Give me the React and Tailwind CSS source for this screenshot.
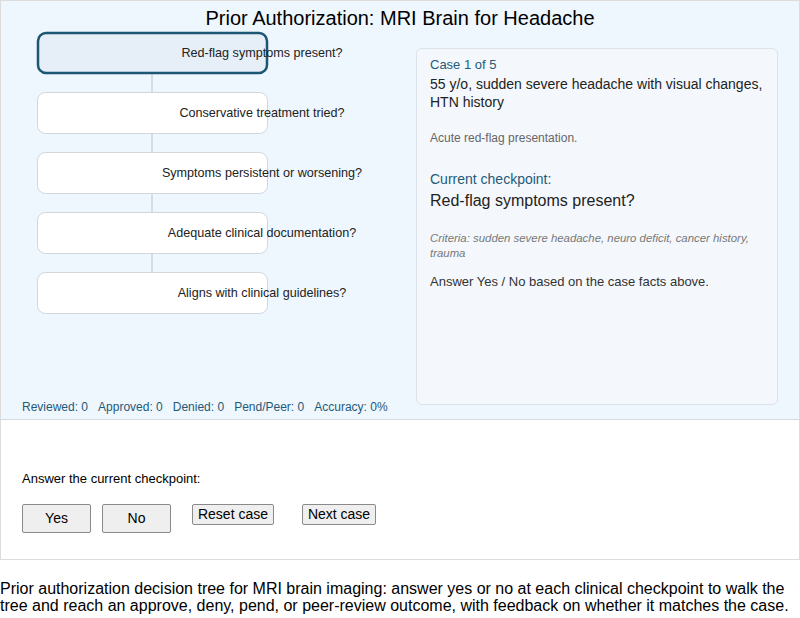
import React from 'react';

const checkpoints = [
    'Red-flag symptoms present?',
    'Conservative treatment tried?',
    'Symptoms persistent or worsening?',
    'Adequate clinical documentation?',
    'Aligns with clinical guidelines?'
];

const DecisionTree = () => (
    <svg width="372" height="300" className="block">
        {checkpoints.slice(0, -1).map((_, i) => (
            <line key={'l' + i} x1="130" x2="130" y1={44 + i * 60} y2={62 + i * 60} stroke="#d0d4d9" strokeWidth="1.5" />
        ))}
        {checkpoints.map((label, i) => {
            const active = i === 0;
            return (
                <g key={label}>
                    <rect
                        x={active ? 16 : 15.5}
                        y={(active ? 3 : 2.5) + i * 60}
                        width={active ? 229 : 230}
                        height={active ? 40 : 41}
                        rx="8"
                        fill={active ? '#e6eef8' : '#ffffff'}
                        stroke={active ? '#1b5673' : '#d3d6da'}
                        strokeWidth={active ? 2.5 : 1}
                    />
                    <text
                        x="240"
                        y={23.5 + i * 60}
                        textAnchor="middle"
                        dominantBaseline="middle"
                        fontSize="12.6"
                        fill="#222"
                        fontFamily="'Liberation Sans', Arial, sans-serif"
                    >
                        {label}
                    </text>
                </g>
            );
        })}
    </svg>
);

const App = () => {
    return (
        <div className="w-[800px] bg-white font-['Liberation_Sans',Arial,sans-serif] text-[#222]">
            <div className="border border-[#dcdcdc]">
                {/* Top: tree + case panel */}
                <div className="h-[419px] flex flex-col bg-[#eef6fe] border-b border-[#d6d9dd] px-[21px]">
                    <h1 className="h-[29px] pt-[5px] text-center text-[20px] leading-[24px] text-black">
                        Prior Authorization: MRI Brain for Headache
                    </h1>
                    <div className="flex flex-1">
                        <div className="flex-1 flex flex-col justify-between pb-[5px]">
                            <DecisionTree />
                            <div className="flex gap-[10px] text-[12px] leading-[14px] text-[#1f5a78]">
                                <span>Reviewed: 0</span>
                                <span>Approved: 0</span>
                                <span>Denied: 0</span>
                                <span>Pend/Peer: 0</span>
                                <span>Accuracy: 0%</span>
                            </div>
                        </div>
                        <div className="w-[362px] h-[357px] mt-[18px] rounded-[6px] border border-[#dae2ec] bg-[#f4f8fc] pl-[13px] pr-[4px] pt-[8px]">
                            <p className="text-[13px] leading-[16px] text-[#1f5a78]">Case 1 of 5</p>
                            <p className="mt-[2px] text-[14px] leading-[18px] text-[#222]">
                                55 y/o, sudden severe headache with visual changes, HTN history
                            </p>
                            <p className="mt-[20px] text-[12px] leading-[14px] text-[#666]">Acute red-flag presentation.</p>
                            <p className="mt-[26px] text-[14px] leading-[17px] text-[#1f5a78]">Current checkpoint:</p>
                            <p className="mt-[3px] text-[16px] leading-[19px] text-[#222]">Red-flag symptoms present?</p>
                            <p className="mt-[21px] pr-[14px] text-[11.4px] leading-[15px] italic text-[#777]">
                                Criteria: sudden severe headache, neuro deficit, cancer history, trauma
                            </p>
                            <p className="mt-[13px] text-[13px] leading-[16px] text-[#333]">
                                Answer Yes / No based on the case facts above.
                            </p>
                        </div>
                    </div>
                </div>

                {/* Bottom: controls */}
                <div className="h-[139px] pl-[21px] pt-[51px]">
                    <p className="text-[13px] leading-[16px] text-black">Answer the current checkpoint:</p>
                    <div className="flex items-start mt-[17px] text-[14px] text-black">
                        <button className="w-[69px] h-[29px] bg-[#efefef] border border-[#8a8a8a] rounded-[2px]">Yes</button>
                        <button className="ml-[11px] w-[69px] h-[29px] bg-[#efefef] border border-[#8a8a8a] rounded-[2px]">No</button>
                        <button className="ml-[21px] w-[82px] h-[21px] leading-[17px] bg-[#efefef] border border-[#8a8a8a] rounded-[2px]">Reset case</button>
                        <button className="ml-[28px] w-[74px] h-[21px] leading-[17px] bg-[#efefef] border border-[#8a8a8a] rounded-[2px]">Next case</button>
                    </div>
                </div>
            </div>

            <p className="mt-[20px] text-[16px] leading-[17px] text-black">
                Prior authorization decision tree for MRI brain imaging: answer yes or no at each clinical checkpoint to walk the tree and reach an approve, deny, pend, or peer-review outcome, with feedback on whether it matches the case.
            </p>
        </div>
    );
};

export default App;
